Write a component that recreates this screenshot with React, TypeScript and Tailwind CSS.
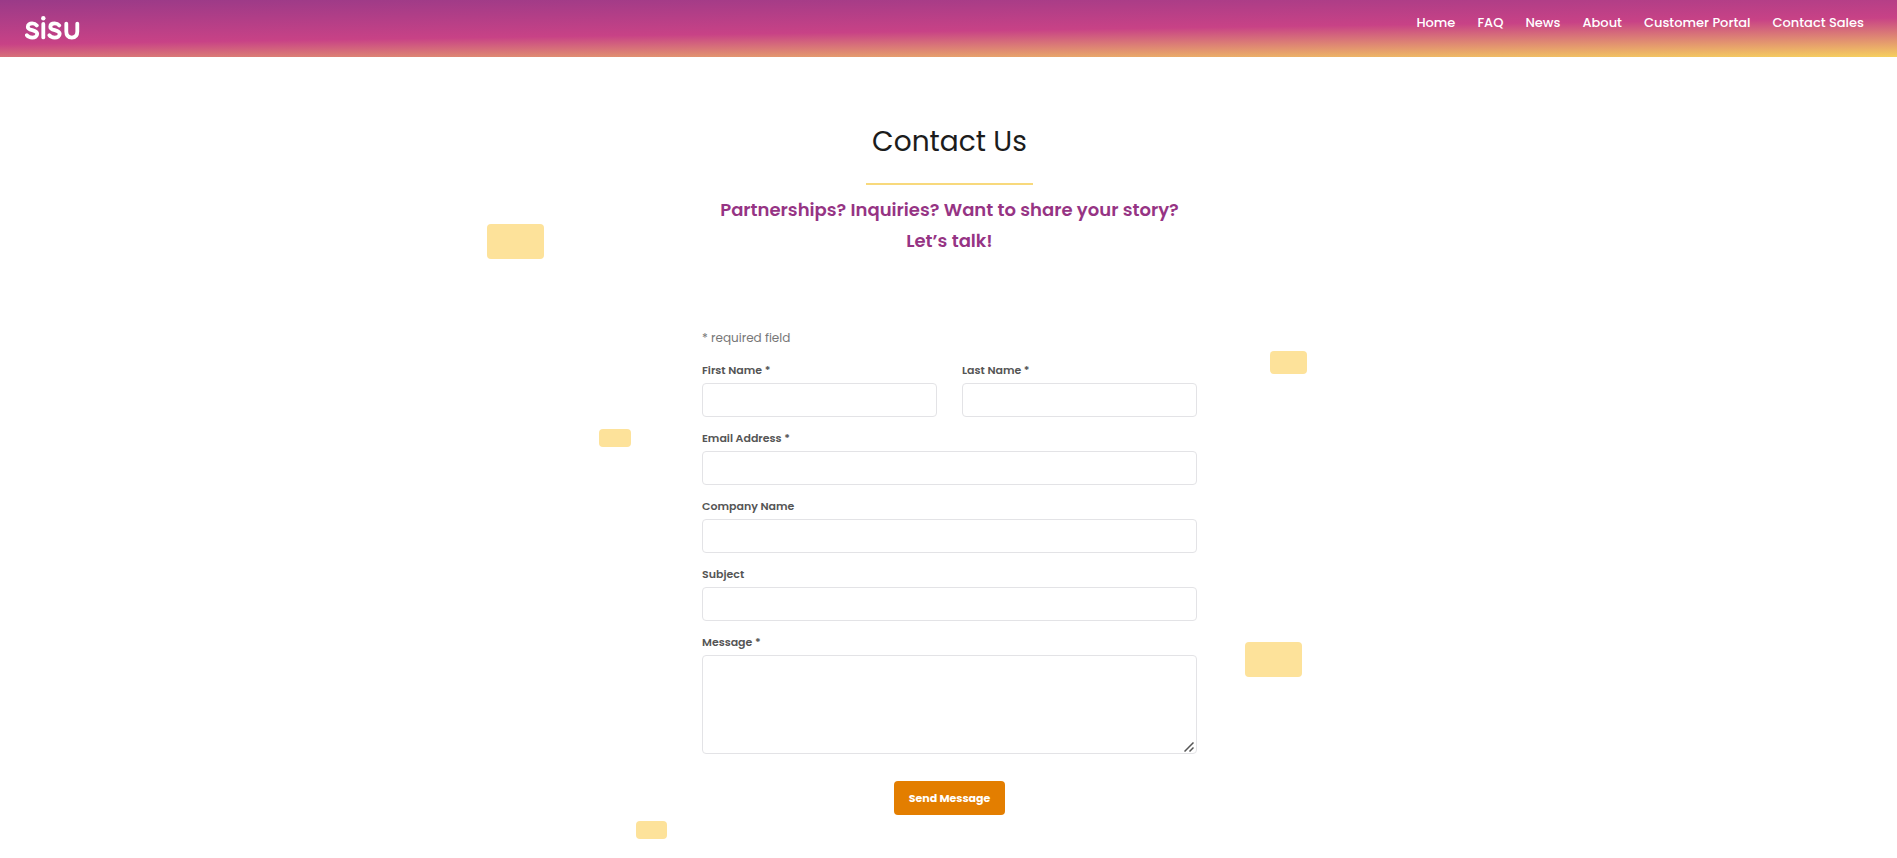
import React from 'react';

const NAV_LINKS = ['Home', 'FAQ', 'News', 'About', 'Customer Portal', 'Contact Sales'];

const Logo = () => (
  <svg width="56" height="26" viewBox="0 0 56 26" fill="none" stroke="white" strokeWidth="3.8" strokeLinecap="round" aria-label="sisu">
    <path d="M11.8 9.4C10.6 8 9 7.4 7.2 7.4C4.7 7.4 2.8 8.6 2.8 10.9C2.8 15.2 12.2 13 12.2 17.8C12.2 20.3 10 21.6 7.2 21.6C5 21.6 3 20.8 1.8 19.2" />
    <path d="M18.3 8V21.4" />
    <circle cx="18.3" cy="2.2" r="2.2" fill="white" stroke="none" />
    <path d="M34.3 9.4C33.1 8 31.5 7.4 29.7 7.4C27.2 7.4 25.3 8.6 25.3 10.9C25.3 15.2 34.7 13 34.7 17.8C34.7 20.3 32.5 21.6 29.7 21.6C27.5 21.6 25.5 20.8 24.3 19.2" />
    <path d="M41.3 7.6V15.6C41.3 19.4 43.4 21.6 46.8 21.6C50.2 21.6 52.3 19.4 52.3 15.6V7.6" />
  </svg>
);

interface FieldProps {
  id: string;
  label: string;
  type?: string;
}

const labelClass = 'block text-[11px] leading-5 font-semibold text-[#555]';
const inputClass = 'block w-full rounded border border-[#e3e3e6] bg-white px-3 text-sm text-[#333] outline-none';

const Field: React.FC<FieldProps> = ({ id, label, type = 'text' }) => (
  <div className="flex flex-col gap-[3px]">
    <label htmlFor={id} className={labelClass}>
      {label}
    </label>
    <input id={id} name={id} type={type} className={`${inputClass} h-[34px]`} />
  </div>
);

export default function App() {
  return (
    <div className="min-h-screen bg-white font-[Poppins,Inter,sans-serif]">
      <header className="flex h-[57px] items-start justify-between bg-[linear-gradient(179.2deg,#9a3a88_0%,#c84286_53%,#f6d05f_100%)] pr-[33px] pl-[25px]">
        <a href="#" aria-label="Sisu home" className="mt-4">
          <Logo />
        </a>
        <nav className="mt-[15px] flex gap-[22px] text-[13px] leading-4 font-medium text-white">
          {NAV_LINKS.map((link) => (
            <a key={link} href="#">
              {link}
            </a>
          ))}
        </nav>
      </header>

      <main className="relative pt-16 pr-4 pb-10 pl-[18px]">
        {/* floating blocks behind the form */}
        <div aria-hidden="true" className="absolute top-0 left-1/2 h-0 w-0">
          <div className="absolute top-[167px] -left-[462px] h-[35px] w-[57px] rounded bg-[#fde29a]" />
          <div className="absolute top-[372px] -left-[350px] h-[18px] w-8 rounded bg-[#fde29a]" />
          <div className="absolute top-[764px] -left-[313px] h-[18px] w-[31px] rounded bg-[#fde29a]" />
          <div className="absolute top-[294px] left-[321px] h-[23px] w-[37px] rounded bg-[#fde29a]" />
          <div className="absolute top-[585px] left-[296px] h-[35px] w-[57px] rounded bg-[#fde29a]" />
        </div>

        <div className="relative mx-auto max-w-[495px]">
          <h1 className="text-center text-[28px] leading-[42px] text-[#1c1c1c]">Contact Us</h1>
          <hr className="mx-auto mt-5 w-[167px] border-t-2 border-[#f8d97c]" />
          <p className="mt-[9px] text-center text-[18px] leading-[31px] font-semibold text-[#963484]">
            Partnerships? Inquiries? Want to share your story?
            <br />
            Let’s talk!
          </p>

          <form className="mt-[72px]" onSubmit={(e) => e.preventDefault()}>
            <p className="text-[12px] leading-5 text-[#777]">* required field</p>
            <div className="mt-3 flex flex-col gap-[11px]">
              <div className="grid grid-cols-2 gap-[25px]">
                <Field id="first-name" label="First Name *" />
                <Field id="last-name" label="Last Name *" />
              </div>
              <Field id="email" label="Email Address *" type="email" />
              <Field id="company" label="Company Name" />
              <Field id="subject" label="Subject" />
              <div className="flex flex-col gap-[3px]">
                <label htmlFor="message" className={labelClass}>
                  Message *
                </label>
                <div className="relative">
                  <textarea id="message" name="message" className={`${inputClass} h-[99px] resize-none py-2`} />
                  <svg
                    className="pointer-events-none absolute right-[3px] bottom-[2px]"
                    width="10"
                    height="10"
                    viewBox="0 0 10 10"
                    stroke="#555"
                    strokeWidth="1.5"
                    aria-hidden="true"
                  >
                    <path d="M0.5 9.5L9.5 0.5M5.5 9.5L9.5 5.5" />
                  </svg>
                </div>
              </div>
            </div>
            <button
              type="submit"
              className="mx-auto mt-[27px] block h-[34px] w-[111px] rounded bg-[#e37e00] text-[11px] font-bold text-white"
            >
              Send Message
            </button>
          </form>
        </div>
      </main>
    </div>
  );
}
